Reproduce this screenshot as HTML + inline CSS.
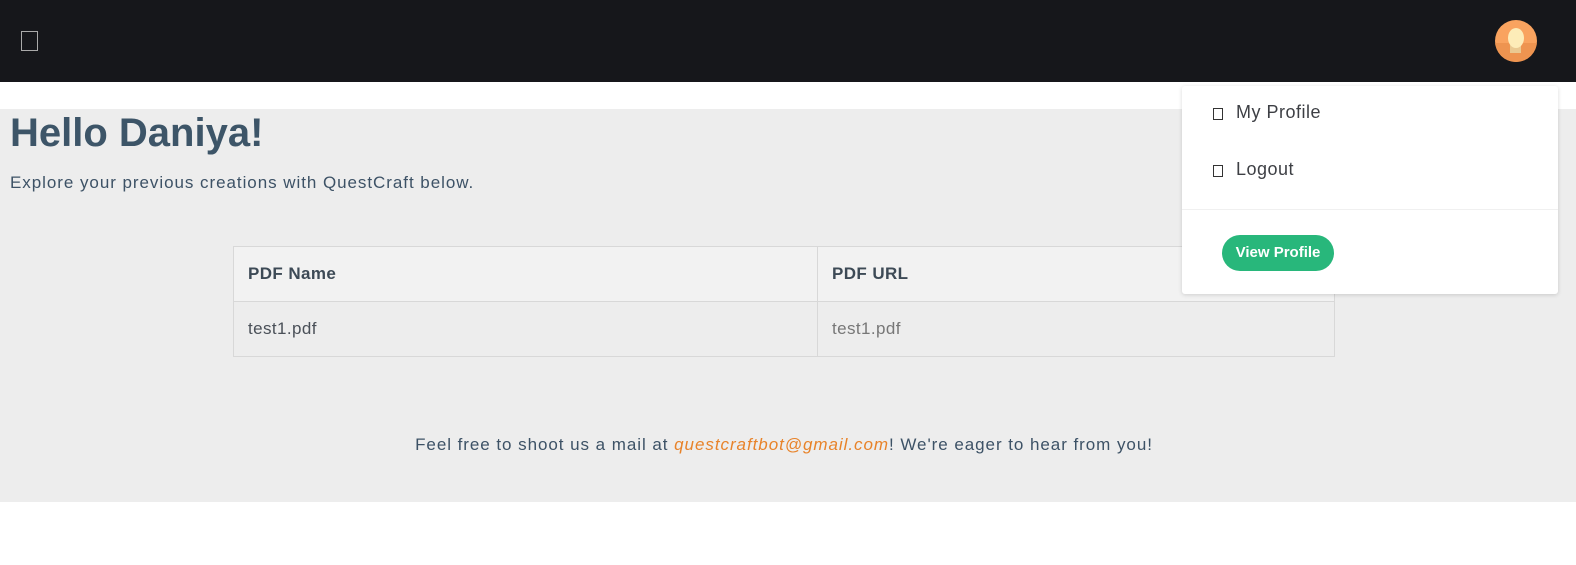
<!DOCTYPE html>
<html><head><meta charset="utf-8"><style>
body{margin:0;width:1576px;height:565px;background:#fff;font-family:"Liberation Sans",sans-serif;position:relative;overflow:hidden;color:#3d5266}
.nav{position:absolute;left:0;top:0;width:1576px;height:82px;background:#16171b}
.box{position:absolute;border:1px solid #999}
.main{position:absolute;left:0;top:109px;width:1576px;height:393px;background:#ededed}
h1{position:absolute;left:10px;top:111px;margin:0;font-size:40px;font-weight:bold;color:#3d5568}
.sub{position:absolute;left:10px;top:173px;font-size:17px;color:#3d5266;letter-spacing:0.95px}
table{position:absolute;left:233px;top:246px;border-collapse:collapse;width:1102px;font-size:17px}
td,th{border:1px solid #d8d8d8;height:54px;padding:0 14px;text-align:left;letter-spacing:0.4px}
th{background:#f2f2f2;font-weight:bold;color:#3d4a56}
td{color:#4a5058}
.foot{position:absolute;left:0;width:1568px;top:435px;text-align:center;font-size:17px;color:#3d5266;letter-spacing:0.95px}
.foot i{color:#e8832a}
.dd{position:absolute;left:1182px;top:86px;width:376px;height:208px;background:#fff;border-radius:3px;box-shadow:0 1px 4px rgba(0,0,0,.15)}
.it{position:absolute;left:54px;font-size:18px;color:#3d3f44;letter-spacing:0.5px}
.ic{position:absolute;left:31px;width:8px;height:10px;border:1px solid #333}
.btn{position:absolute;left:40px;top:149px;width:112px;height:36px;border-radius:18px;background:#28b77b;color:#fff;font-size:15px;font-weight:bold;line-height:36px;text-align:center}
</style></head><body>
<div class="nav">
<div class="box" style="left:21px;top:31px;width:15px;height:18px;border-color:#aaa"></div>
<div style="position:absolute;left:1495px;top:20px;width:42px;height:42px;border-radius:50%;background:#f9a35f;overflow:hidden">
<div style="position:absolute;left:0;top:23px;width:42px;height:19px;background:#ee9450"></div>
<div style="position:absolute;left:15px;top:25px;width:11px;height:8px;background:#eac991"></div>
<div style="position:absolute;left:13px;top:8px;width:16px;height:20px;border-radius:50%;background:#fdecb8"></div>
</div></div>
<div class="main"></div>
<h1>Hello Daniya!</h1>
<div class="sub">Explore your previous creations with QuestCraft below.</div>
<table><tr><th style="width:555px">PDF Name</th><th>PDF URL</th></tr>
<tr><td>test1.pdf</td><td style="color:#777">test1.pdf</td></tr></table>
<div class="foot">Feel free to shoot us a mail at <i>questcraftbot@gmail.com</i>! We're eager to hear from you!</div>
<div class="dd">
<div class="ic" style="top:22px"></div><div class="it" style="top:16px">My Profile</div>
<div class="ic" style="top:79px"></div><div class="it" style="top:73px">Logout</div>
<div style="position:absolute;left:0;top:123px;width:376px;height:1px;background:#f0f0f0"></div>
<div class="btn">View Profile</div>
</div>
</body></html>
